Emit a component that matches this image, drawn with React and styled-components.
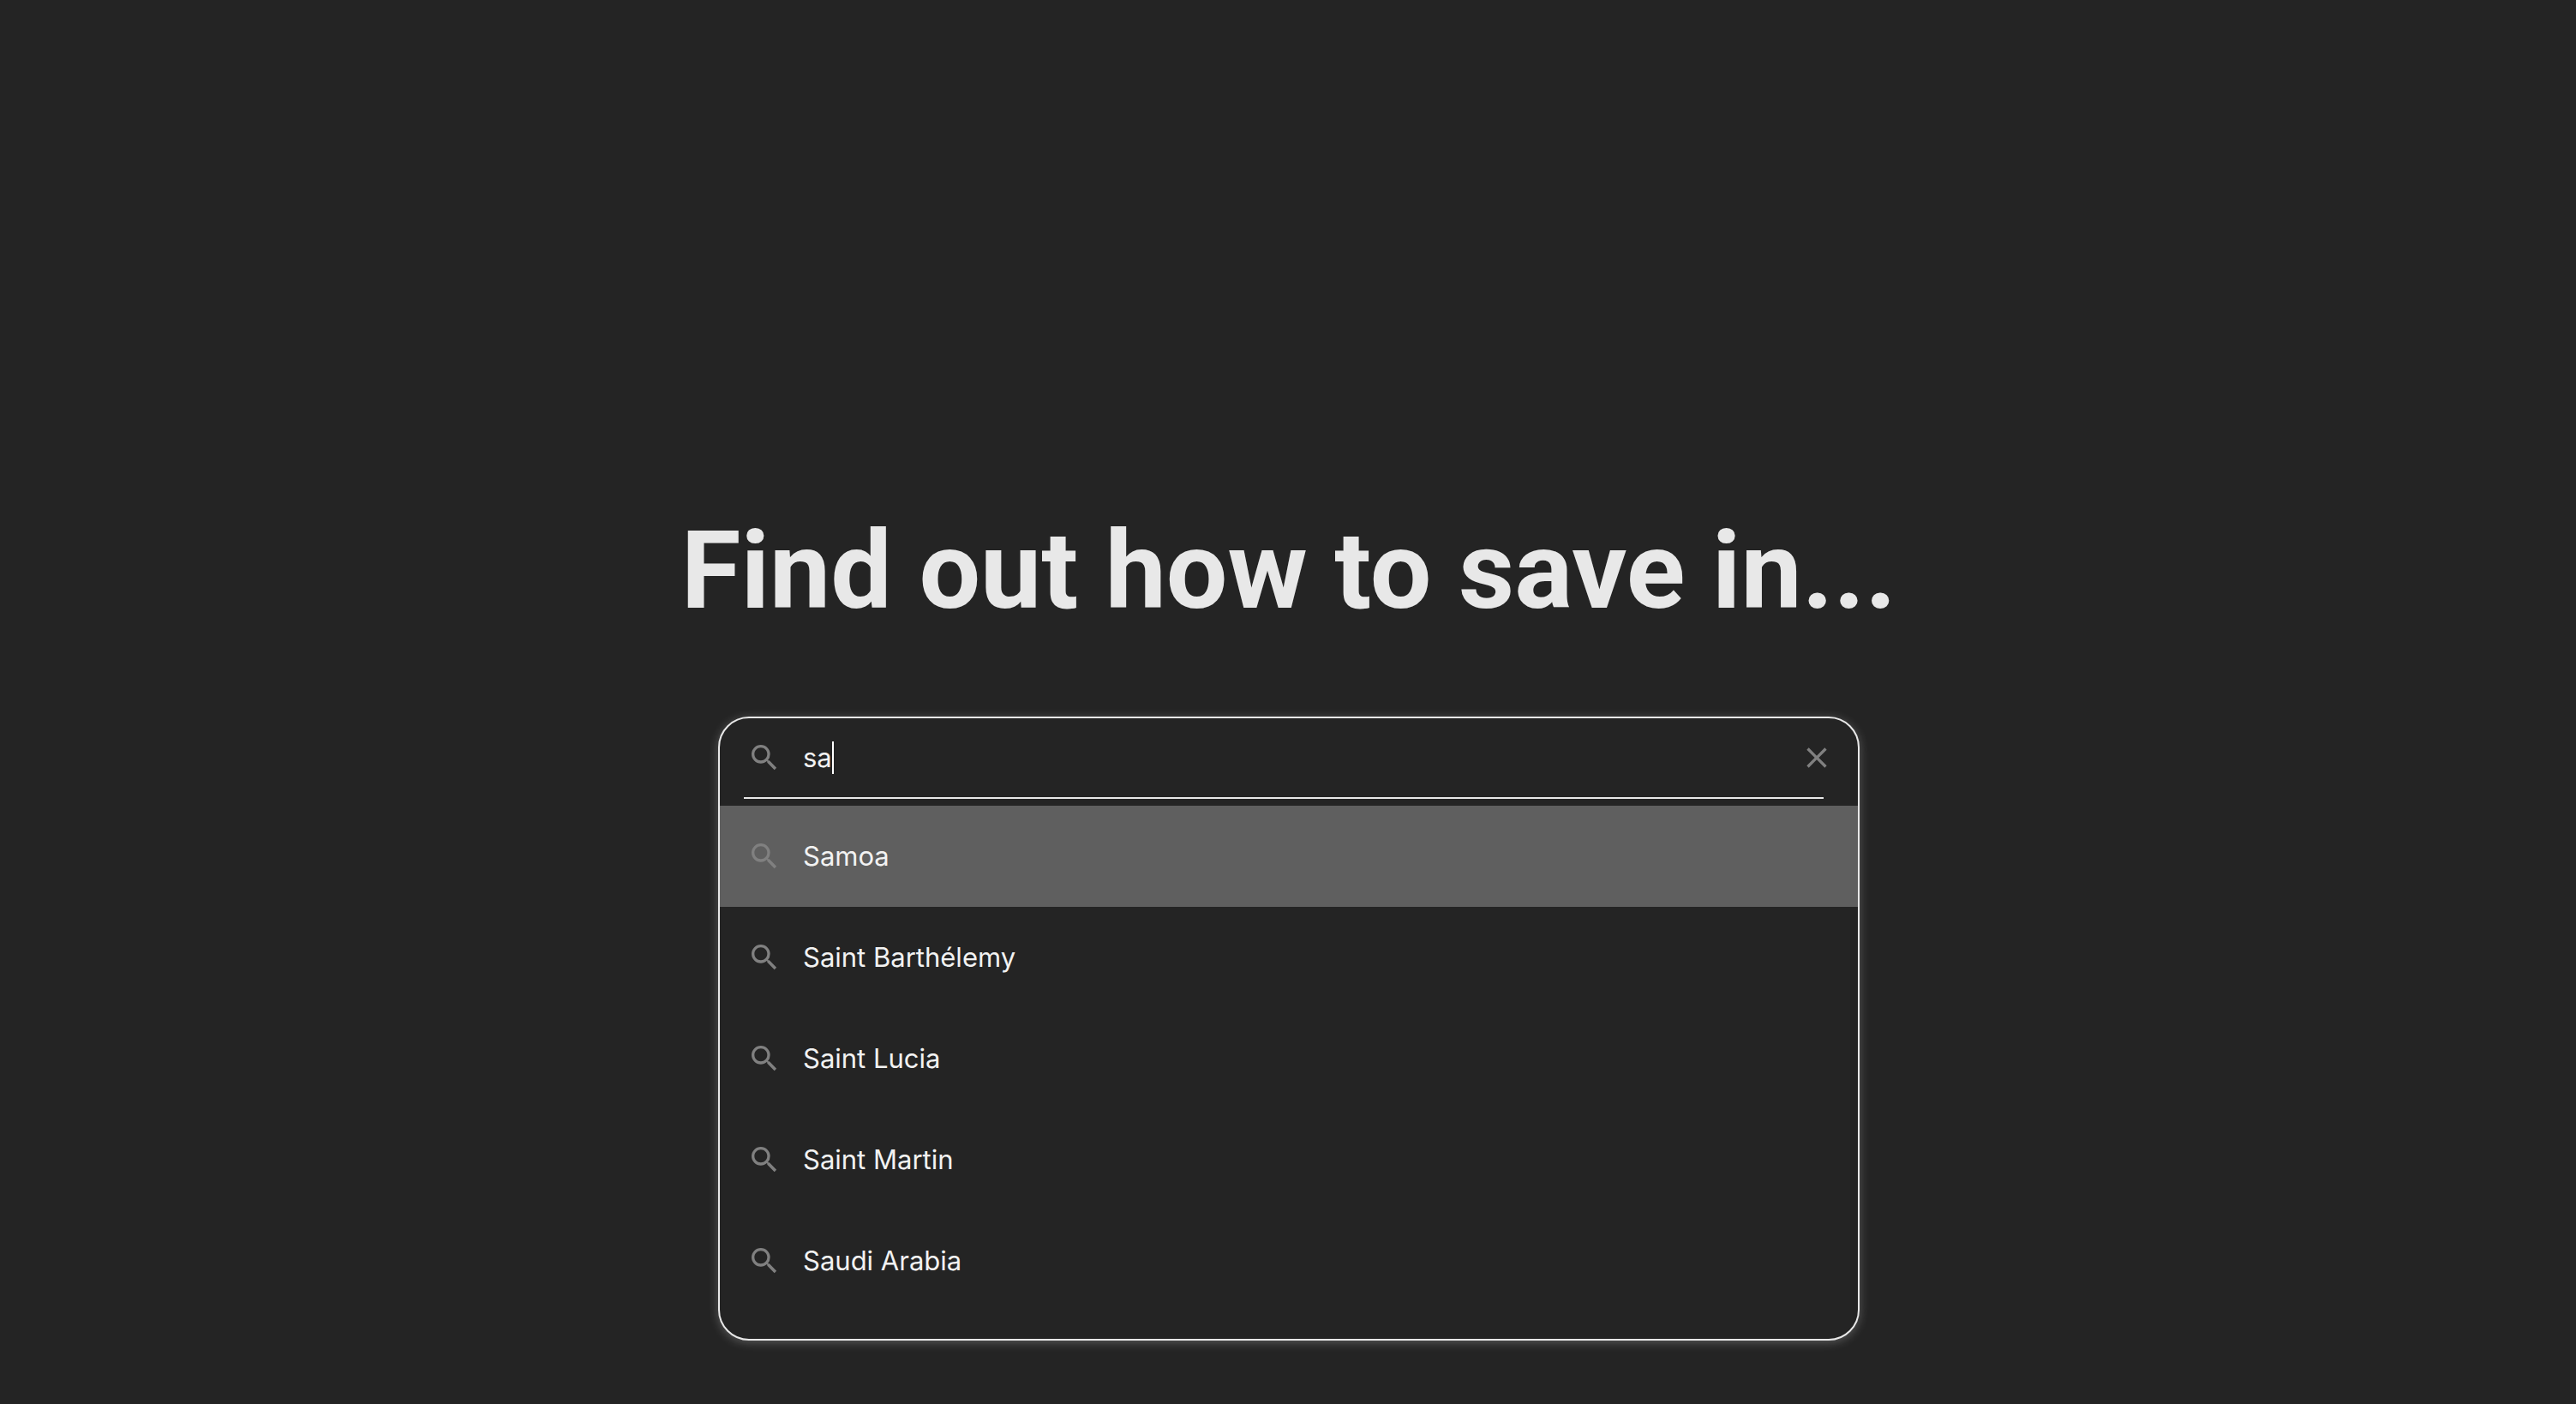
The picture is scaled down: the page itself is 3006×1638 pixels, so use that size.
import React, { useState } from "react";
import styled, { createGlobalStyle, css } from "styled-components";

const GlobalStyle = createGlobalStyle`
  *, *::before, *::after { box-sizing: border-box; }
  body {
    margin: 0;
    background: #242424;
    color: #e8e8e8;
    font-family: Inter, "Liberation Sans", sans-serif;
  }
`;

const Page = styled.main`
  min-height: 100vh;
  display: flex;
  flex-direction: column;
  align-items: center;
  gap: 100px;
  padding: 596px 32px 48px 34px;
`;

const Title = styled.h1`
  margin: 0;
  font-family: Roboto, Inter, sans-serif;
  font-size: 127px;
  line-height: 140px;
  font-weight: 700;
  text-align: center;
`;

const SearchBox = styled.section`
  width: 100%;
  max-width: 1332px;
  overflow: hidden;
  border: 2px solid #e8e8e8;
  border-radius: 36px;
  background: #242424;
  box-shadow: 0 2px 12px rgba(232, 232, 232, 0.28);
  font-size: 31px;
  line-height: 40px;
`;

const rowLayout = css`
  display: flex;
  align-items: center;
  gap: 25px;
  padding: 0 28px 0 32px;
`;

const SearchBar = styled.div`
  ${rowLayout}
  height: 92px;
`;

const Field = styled.label`
  flex: 1;
  display: flex;
  align-items: center;
  gap: 25px;
  cursor: text;
`;

const Entry = styled.span`
  display: flex;
  align-items: center;
`;

const TextInput = styled.input`
  field-sizing: content;
  padding: 0;
  border: 0;
  outline: 0;
  background: transparent;
  color: #f2f2f2;
  caret-color: transparent;
  font: inherit;
`;

const Caret = styled.span`
  width: 2px;
  height: 38px;
  background: #ffffff;
`;

const ClearButton = styled.button`
  display: flex;
  padding: 0;
  border: 0;
  background: transparent;
  cursor: pointer;
`;

const Icon = styled.svg`
  flex: none;
  width: 40px;
  height: 40px;
  fill: #808080;
`;

const Divider = styled.hr`
  height: 2px;
  margin: 0 40px 8px 28px;
  border: 0;
  background: #e8e8e8;
`;

const Results = styled.ul`
  margin: 0;
  padding: 0 0 32px;
  list-style: none;
`;

const Result = styled.li`
  ${rowLayout}
  height: 118px;
  background: ${({ $active }) => ($active ? "#5f5f5f" : "transparent")};
  color: #f2f2f2;
  cursor: default;
`;

const SearchIcon = () => (
  <Icon viewBox="0 0 24 24" aria-hidden="true">
    <path d="M15.5 14h-.79l-.28-.27A6.471 6.471 0 0 0 16 9.5 6.5 6.5 0 1 0 9.5 16c1.61 0 3.09-.59 4.23-1.57l.27.28v.79l5 4.99L20.49 19l-4.99-5zm-6 0C7.01 14 5 11.99 5 9.5S7.01 5 9.5 5 14 7.01 14 9.5 11.99 14 9.5 14z" />
  </Icon>
);

const ClearIcon = () => (
  <Icon viewBox="0 0 24 24" aria-hidden="true">
    <path d="M19 6.41L17.59 5 12 10.59 6.41 5 5 6.41 10.59 12 5 17.59 6.41 19 12 13.41 17.59 19 19 17.59 13.41 12z" />
  </Icon>
);

const countries = ["Samoa", "Saint Barthélemy", "Saint Lucia", "Saint Martin", "Saudi Arabia"];

export default function App() {
  const [query, setQuery] = useState("sa");
  const [active, setActive] = useState(0);

  return (
    <>
      <GlobalStyle />
      <Page>
        <Title>Find out how to save in...</Title>
        <SearchBox>
          <SearchBar>
            <Field>
              <SearchIcon />
              <Entry>
                <TextInput
                  type="text"
                  aria-label="Country"
                  value={query}
                  onChange={(event) => setQuery(event.target.value)}
                />
                <Caret />
              </Entry>
            </Field>
            <ClearButton type="button" aria-label="Clear" onClick={() => setQuery("")}>
              <ClearIcon />
            </ClearButton>
          </SearchBar>
          <Divider />
          <Results>
            {countries.map((name, index) => (
              <Result key={name} $active={index === active} onMouseEnter={() => setActive(index)}>
                <SearchIcon />
                <span>{name}</span>
              </Result>
            ))}
          </Results>
        </SearchBox>
      </Page>
    </>
  );
}
